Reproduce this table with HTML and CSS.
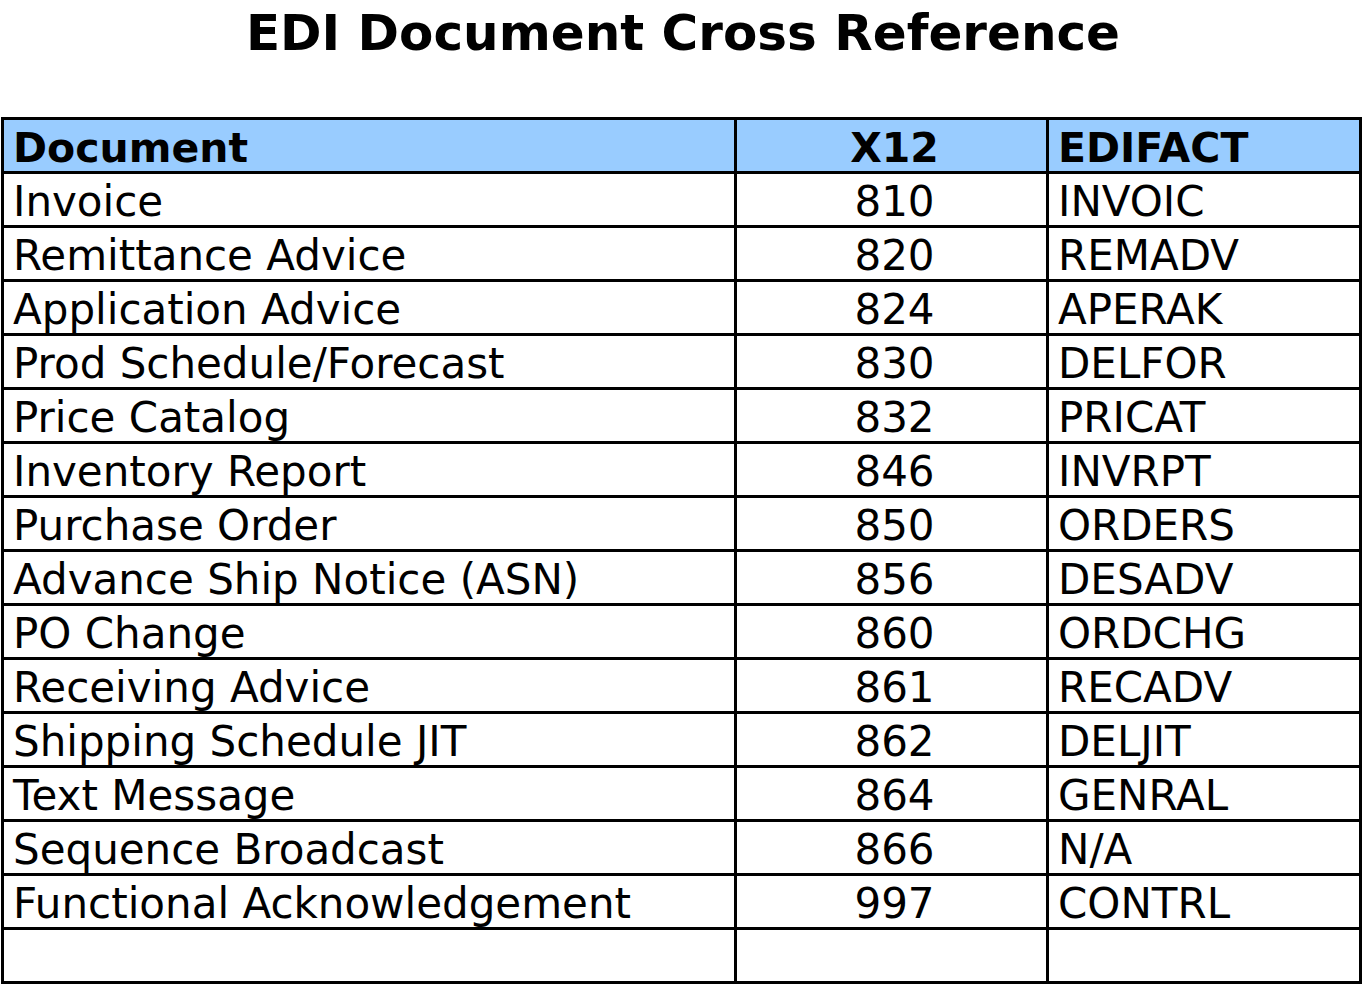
FILE: index.html
```html
<!DOCTYPE html>
<html lang="en">
<head>
<meta charset="utf-8">
<title>EDI Document Cross Reference</title>
<link rel="stylesheet" href="styles.css">
</head>
<body>
<h1 class="title">EDI Document Cross Reference</h1>
<table class="xref">
  <colgroup>
    <col class="c-doc">
    <col class="c-x12">
    <col class="c-edi">
  </colgroup>
  <thead>
    <tr><th class="doc">Document</th><th class="x12">X12</th><th class="edi">EDIFACT</th></tr>
  </thead>
  <tbody>
    <tr><td class="doc">Invoice</td><td class="x12">810</td><td class="edi">INVOIC</td></tr>
    <tr><td class="doc">Remittance Advice</td><td class="x12">820</td><td class="edi">REMADV</td></tr>
    <tr><td class="doc">Application Advice</td><td class="x12">824</td><td class="edi">APERAK</td></tr>
    <tr><td class="doc">Prod Schedule/Forecast</td><td class="x12">830</td><td class="edi">DELFOR</td></tr>
    <tr><td class="doc">Price Catalog</td><td class="x12">832</td><td class="edi">PRICAT</td></tr>
    <tr><td class="doc">Inventory Report</td><td class="x12">846</td><td class="edi">INVRPT</td></tr>
    <tr><td class="doc">Purchase Order</td><td class="x12">850</td><td class="edi">ORDERS</td></tr>
    <tr><td class="doc">Advance Ship Notice (ASN)</td><td class="x12">856</td><td class="edi">DESADV</td></tr>
    <tr><td class="doc">PO Change</td><td class="x12">860</td><td class="edi">ORDCHG</td></tr>
    <tr><td class="doc">Receiving Advice</td><td class="x12">861</td><td class="edi">RECADV</td></tr>
    <tr><td class="doc">Shipping Schedule JIT</td><td class="x12">862</td><td class="edi">DELJIT</td></tr>
    <tr><td class="doc">Text Message</td><td class="x12">864</td><td class="edi">GENRAL</td></tr>
    <tr><td class="doc">Sequence Broadcast</td><td class="x12">866</td><td class="edi">N/A</td></tr>
    <tr><td class="doc">Functional Acknowledgement</td><td class="x12">997</td><td class="edi">CONTRL</td></tr>
    <tr><td class="doc">&nbsp;</td><td class="x12">&nbsp;</td><td class="edi">&nbsp;</td></tr>
  </tbody>
</table>
</body>
</html>
```
FILE: styles.css
```css
html, body {
  margin: 0;
  padding: 0;
  background: #ffffff;
}

body {
  font-family: "DejaVu Sans", Verdana, sans-serif;
  color: #000000;
}

.title {
  margin: 0;
  height: 117px;
  padding-top: 3px;
  box-sizing: border-box;
  font-size: 50px;
  font-weight: bold;
  line-height: 60px;
  text-align: center;
}

.xref {
  margin-left: 1px;
  width: 1361px;
  border-collapse: collapse;
  border: 3px solid #000000;
  table-layout: fixed;
}

.c-doc { width: 733px; }
.c-x12 { width: 312px; }
.c-edi { width: 313px; }

.xref th,
.xref td {
  border: 3px solid #000000;
  padding: 4px 0 0 9px;
  font-size: 42px;
  line-height: 47px;
  white-space: nowrap;
  overflow: hidden;
  text-align: left;
  vertical-align: middle;
}

.xref th {
  background: #99ccff;
  font-weight: bold;
  font-size: 41px;
  padding-top: 6px;
  line-height: 45px;
}

.xref .x12 {
  text-align: center;
  padding-left: 6px;
}
```
